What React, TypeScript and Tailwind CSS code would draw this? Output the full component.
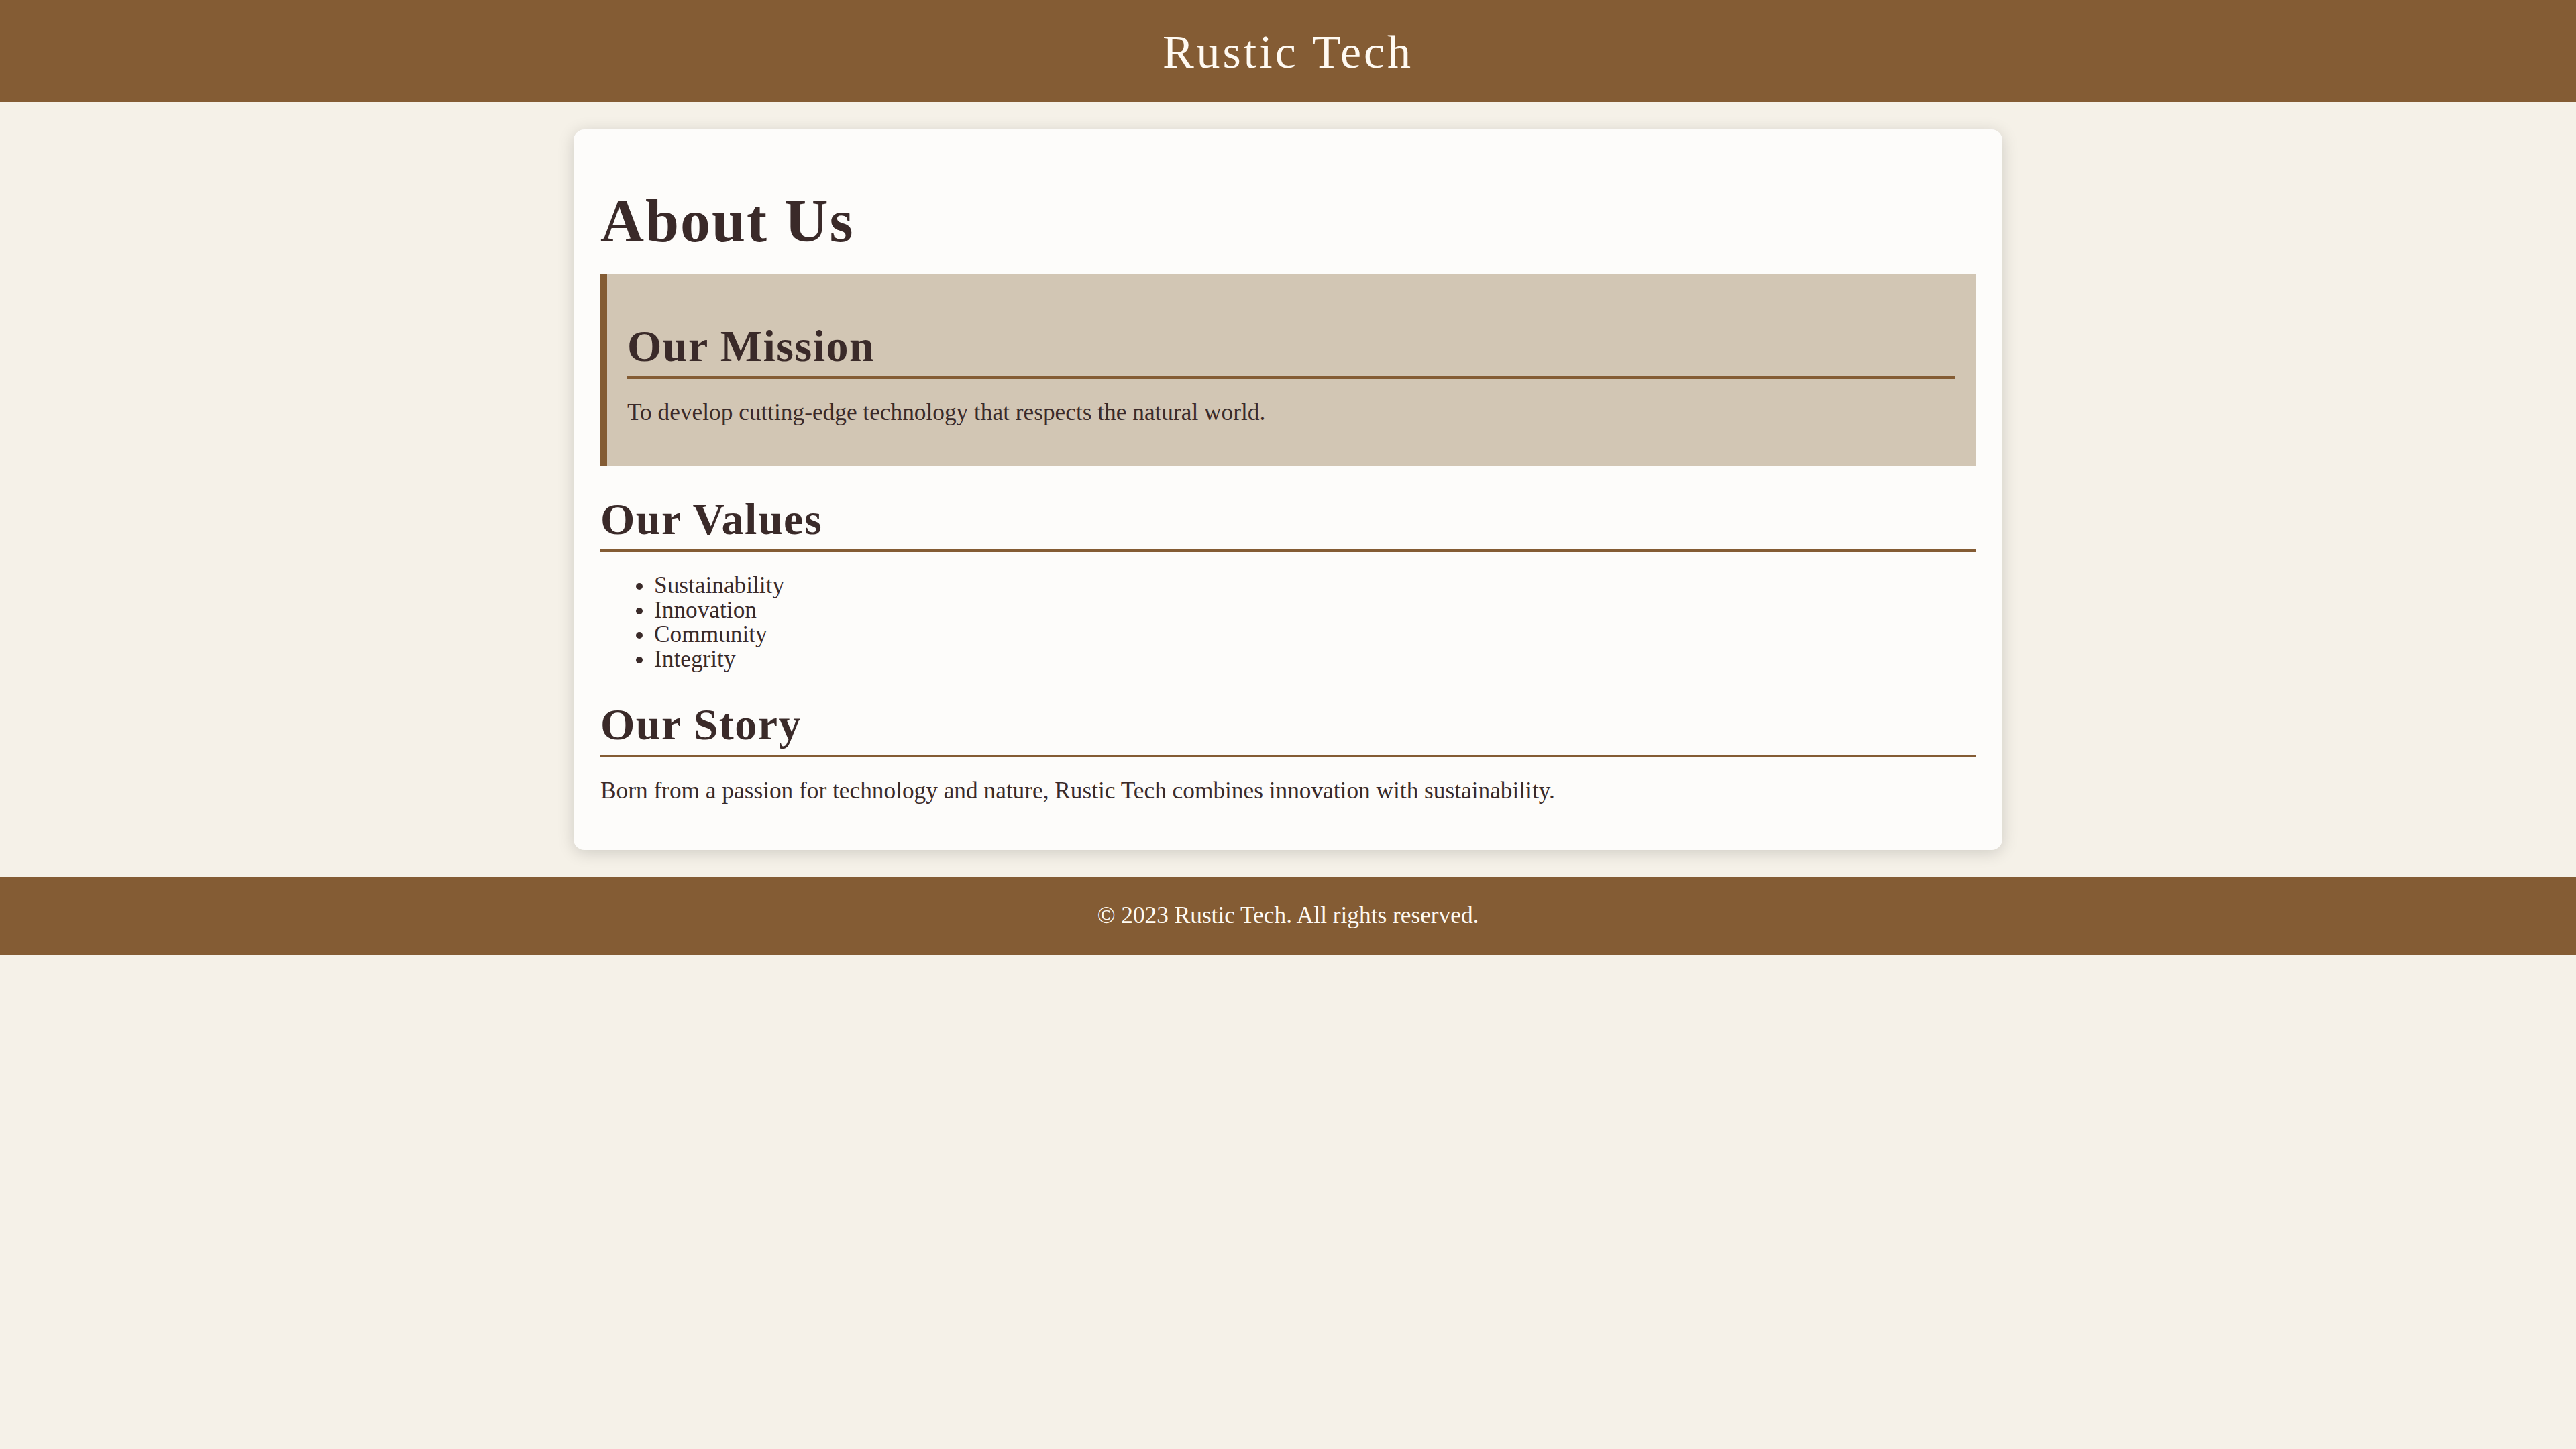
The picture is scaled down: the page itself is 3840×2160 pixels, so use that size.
import React from 'react';

const values = ['Sustainability', 'Innovation', 'Community', 'Integrity'];

const SectionTitle: React.FC<{ children: React.ReactNode; className?: string }> = ({ children, className = '' }) => (
  <h2
    className={`text-[66px] leading-[65px] tracking-[1.5px] font-bold text-[#3a2a29] pb-[13px] border-b-4 border-[#845c34] ${className}`}
  >
    {children}
  </h2>
);

const App: React.FC = () => {
  return (
    <div className="min-h-screen bg-[#f5f1e8] font-['Liberation_Serif','Times_New_Roman',serif] text-[#3a2a29]">
      {/* Header */}
      <header className="bg-[#845c34] pt-[42px] pb-[38px] text-center">
        <h1 className="text-[70px] leading-[72px] tracking-[4px] font-normal text-[#fffaf2]">Rustic Tech</h1>
      </header>

      {/* Main card */}
      <main className="pt-[41px] pb-10">
        <div className="w-[2130px] mx-auto bg-[#fdfcfa] rounded-[16px] shadow-[0_4px_24px_rgba(0,0,0,0.16)] px-10 pt-10 pb-10 flow-root">
          <h1 className="mt-[51px] mb-[33px] text-[90px] leading-[91px] tracking-[2px] font-bold">About Us</h1>

          {/* Mission */}
          <section className="bg-[#d2c6b4] border-l-[10px] border-[#845c34] px-[30px] py-[30px]">
            <SectionTitle className="mt-[45px]">Our Mission</SectionTitle>
            <p className="mt-8 mb-8 text-[35.3px] leading-[36.4px]">
              To develop cutting-edge technology that respects the natural world.
            </p>
          </section>

          {/* Values */}
          <SectionTitle className="mt-[46px]">Our Values</SectionTitle>
          <ul className="list-disc pl-[80px] my-8 text-[35.3px] leading-[36.4px]">
            {values.map((v) => (
              <li key={v}>{v}</li>
            ))}
          </ul>

          {/* Story */}
          <SectionTitle className="mt-[46px]">Our Story</SectionTitle>
          <p className="mt-8 mb-[30px] text-[35.3px] leading-[36.4px]">
            Born from a passion for technology and nature, Rustic Tech combines innovation with sustainability.
          </p>
        </div>
      </main>

      {/* Footer */}
      <footer className="bg-[#845c34] py-10 text-center">
        <p className="text-[35.3px] leading-[36.4px] text-[#fffaf2]">© 2023 Rustic Tech. All rights reserved.</p>
      </footer>
    </div>
  );
};

export default App;
